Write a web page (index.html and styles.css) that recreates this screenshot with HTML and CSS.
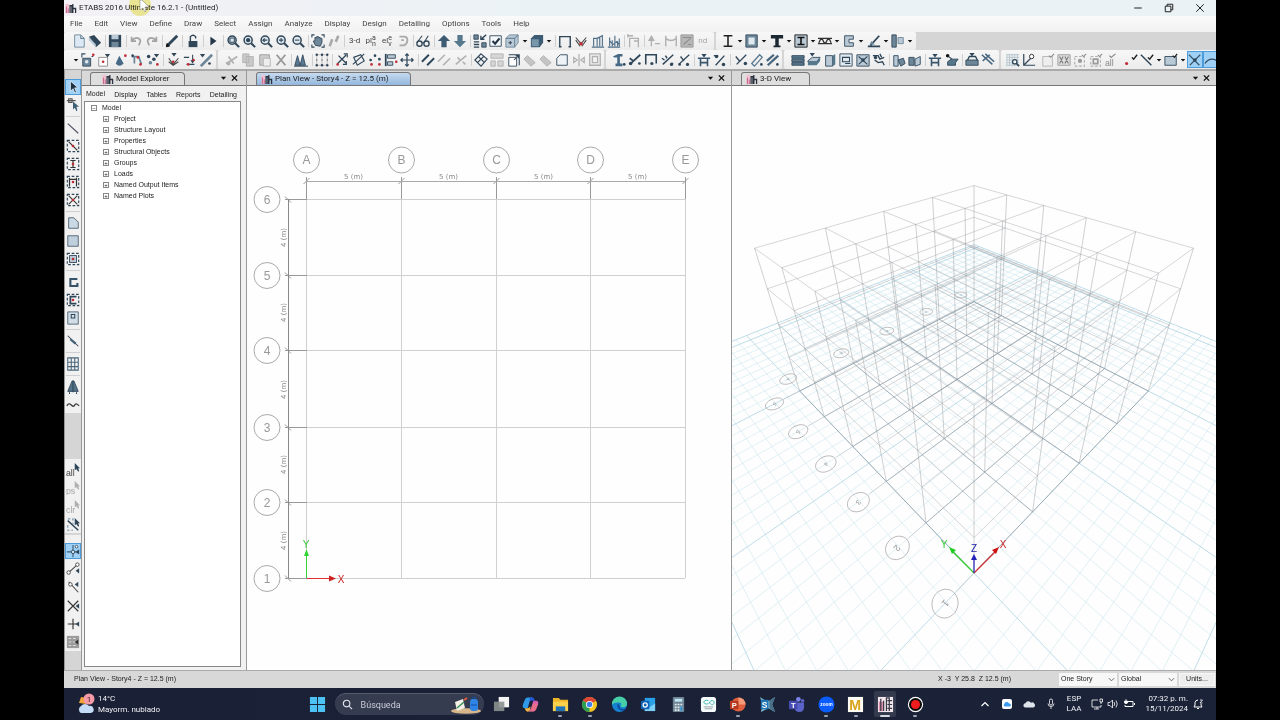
FILE: index.html
```html
<!DOCTYPE html>
<html lang="en">
<head>
<meta charset="utf-8">
<title>ETABS 2016 Ultimate 16.2.1 - (Untitled)</title>
<link rel="stylesheet" href="styles.css">
</head>
<body>
<svg class="defs" aria-hidden="true">
  <symbol id="logo" viewBox="0 0 12 12"><path d="M0 1h4v10H0z" fill="#f0bfd0"/><path d="M1 4v7M3 6v5" stroke="#c25c86"/><path d="M5 11V3h2v8M8 11V1M8 6h3v5" fill="none" stroke="#2b3340" stroke-width="1.4"/></symbol>
  <symbol id="down" viewBox="0 0 8 8"><path d="M1 2.5h6L4 6z" fill="#111"/></symbol>
  <symbol id="close" viewBox="0 0 8 8"><path d="M1 1l6 6M7 1L1 7" stroke="#111" stroke-width="1.6"/></symbol>
  <symbol id="chev" viewBox="0 0 8 8"><path d="M1 2.5l3 3 3-3" fill="none" stroke="#555"/></symbol>
</svg>
<div class="app">
  <header class="titlebar">
    <svg class="logo"><use href="#logo"/></svg>
    <h1 class="title">ETABS 2016 Ultimate 16.2.1 - (Untitled)</h1>
    <div class="window-buttons">
      <button aria-label="Minimize"><svg viewBox="0 0 8 8"><path d="M1 4h6" stroke="#222" stroke-width=".8"/></svg></button>
      <button aria-label="Restore"><svg viewBox="0 0 8 8"><path d="M1 2.5h4.5V7H1zM2.500 2.500V1H7v4.500H5.500" fill="none" stroke="#222" stroke-width=".8"/></svg></button>
      <button aria-label="Close"><svg viewBox="0 0 8 8"><path d="M1 1l6 6M7 1L1 7" stroke="#222" stroke-width=".8"/></svg></button>
    </div>
    <svg class="pointer" viewBox="0 0 26 24" aria-hidden="true"><circle cx="12" cy="5" r="11" fill="#f6f29a"/></svg>
    <svg class="pointer pointer-arrow" viewBox="0 0 26 24" aria-hidden="true"><path d="M12 0v10l3-2 2 4 1-1-1-4h4L14 0z" fill="#fff" stroke="#888" stroke-width=".6"/></svg>
  </header>
  <nav class="menubar" aria-label="Menu">
    <button>File</button><button>Edit</button><button>View</button><button>Define</button><button>Draw</button><button>Select</button><button>Assign</button><button>Analyze</button><button>Display</button><button>Design</button><button>Detailing</button><button>Options</button><button>Tools</button><button>Help</button>
  </nav>
  <div class="toolrow">
    <div class="strip strip-standard" data-tools="new open | save | undo redo | pencil | lock | play | zoomwin zoomfit zoomback zoomin zoomout | pan walk | t:3-d t:plan t:elev rotate | glasses | up down | swap check cube v:cube solid v:solid | frame joint bars bars2 | frameg | pointg frameh boxg t:nd"></div>
    <div class="strip strip-sections" data-tools="ibeam v:i concrete v:r tee v:t encased v:e deck v:d channel v:c brace v:b wall v:w"></div>
  </div>
  <div class="toolrow toolrow-last">
    <div class="strip strip-points" data-tools="v:p boxpin dotpin drop joints scatter | jointc pinlift rodpin"></div>
    <div class="strip strip-edit" data-tools="cut copy paste delete | towers | nodes | cross turn scatter2 align move | par parg crossg | mesh splitg extend diag diag2 chamfer mirrorg offsetg"></div>
    <div class="strip strip-frame" data-tools="section release end load1 load2 | table pct | dist slope rod"></div>
    <div class="strip strip-shell" data-tools="slab slab2 panel opening diaph springs | pier spandrel | table slab3 | stack diag3"></div>
    <div class="strip strip-snap" data-tools="gridsel axes | selg xg ptg2 ptg3 allcheck | redcheck linecheck v:l area v:a snap:on curve:on"></div>
  </div>

  <main class="work">
    <aside class="side" aria-label="Draw tools">
      <div class="vstrip vstrip-draw" data-tools="cursor:on nodecursor | line dashline dashcol dashwall dashx | poly rect dashrect | cwall dashc door | link | grid3 | tower wave"></div>
      <div class="vstrip vstrip-select" data-tools="selall selps selclr selline"></div>
      <div class="vstrip vstrip-snap" data-tools="snap1:on snap2 snap3 snap4 snap5 snap6"></div>
    </aside>

    <section class="pane explorer">
      <div class="pane-head"><button class="tab"><svg class="logo"><use href="#logo"/></svg>Model Explorer</button>
        <span class="pane-tools"><button aria-label="Window options"><svg><use href="#down"/></svg></button><button aria-label="Close pane"><svg><use href="#close"/></svg></button></span></div>
      <div class="subtabs"><button class="is-active">Model</button><button>Display</button><button>Tables</button><button>Reports</button><button>Detailing</button></div>
      <div class="tree">
        <ul class="tree-root"><li><span class="box">−</span>Model
          <ul class="tree-items"><li><span class="box">+</span>Project</li><li><span class="box">+</span>Structure Layout</li><li><span class="box">+</span>Properties</li><li><span class="box">+</span>Structural Objects</li><li><span class="box">+</span>Groups</li><li><span class="box">+</span>Loads</li><li><span class="box">+</span>Named Output Items</li><li><span class="box">+</span>Named Plots</li></ul></li></ul>
      </div>
    </section>

    <section class="pane">
      <div class="pane-head"><button class="tab tab-plan"><svg class="logo"><use href="#logo"/></svg>Plan View - Story4 - Z = 12.5 (m)</button>
        <span class="pane-tools"><button aria-label="Window options"><svg><use href="#down"/></svg></button><button aria-label="Close pane"><svg><use href="#close"/></svg></button></span></div>
      <svg class="canvas" id="plan" viewBox="247 86 484 584" role="img" aria-label="Plan view"></svg>
    </section>

    <section class="pane">
      <div class="pane-head"><button class="tab tab-3d"><svg class="logo"><use href="#logo"/></svg>3-D View</button>
        <span class="pane-tools"><button aria-label="Window options"><svg><use href="#down"/></svg></button><button aria-label="Close pane"><svg><use href="#close"/></svg></button></span></div>
      <svg class="canvas" id="scene" viewBox="732 86 484 584" preserveAspectRatio="xMidYMid slice" role="img" aria-label="3-D view"></svg>
    </section>
  </main>

  <footer class="status">
    <span class="status-view">Plan View - Story4 - Z = 12.5 (m)</span>
    <span class="status-pos">X -3&nbsp; Y 25.8&nbsp; Z 12.5 (m)</span>
    <span class="pick"><select aria-label="Story"><option>One Story</option></select><svg><use href="#chev"/></svg></span>
    <span class="pick"><select aria-label="Coordinate system"><option>Global</option></select><svg><use href="#chev"/></svg></span>
    <button class="units">Units...</button>
  </footer>

  <div class="taskbar">
    <button class="weather">
      <svg viewBox="0 0 20 24"><path d="M3 11l2-6 6 1-1 6z" fill="#f2a33a"/><circle cx="13" cy="7" r="5.500" fill="#f79aa8"/><text x="13" y="10" font-size="8" text-anchor="middle" fill="#3a1820">1</text><path d="M5 21a4 4 0 0 1 0-7 5 5 0 0 1 8 0 3.500 3.500 0 0 1 2 7z" fill="#c4dcf8"/></svg>
      <span>14°C<br>Mayorm. nublado</span>
    </button>
    <div class="dock">
      <button aria-label="Start"><svg viewBox="0 0 18 18"><path d="M1 1h7.500v7.500H1zM9.500 1H17v7.500H9.500zM1 9.500h7.500V17H1zM9.500 9.500H17V17H9.500z" fill="#4cc3f4"/></svg></button>
      <label class="search"><svg viewBox="0 0 12 12"><circle cx="5" cy="5" r="3.600" fill="none" stroke="#e6e9f0" stroke-width="1.200"/><path d="M8 8l3 3" stroke="#e6e9f0" stroke-width="1.200"/></svg><input type="text" placeholder="Búsqueda" aria-label="Búsqueda">
        <svg class="promo" viewBox="0 0 30 18"><ellipse cx="15" cy="15" rx="15" ry="2.800" fill="#d8b68c"/><path d="M4 6l8-3 2 9-8 3z" fill="#f4f1e6"/><path d="M6 12l7-6" stroke="#3c8b5b" stroke-width="1.500"/><rect x="19" y="3" width="8" height="12" rx="3" fill="#2f84e6"/><path d="M21 3a2 2 0 0 1 4 0M20 9h6" stroke="#0f4ea8" fill="none"/><path d="M13 4l3-2" stroke="#e05a3a" stroke-width="2"/></svg></label>
      <button aria-label="Task view"><svg viewBox="0 0 18 18"><path d="M6 1h11v11H6z" fill="#f4f4f4"/><path d="M1 6h11v10H1z" fill="#8b918f" opacity=".9"/></svg></button>
      <button aria-label="Copilot"><svg viewBox="0 0 18 18"><path d="M6 1.500h5Q9 3 8 6l-2 7H3q-3 0-2-4l2-5q1-2.500 3-2.500z" fill="#2f9be8"/><path d="M9 1.500h2.500Q13 2 13.500 5H9Q8 6 8 6q0-4 1-4.500z" fill="#2656d8"/><path d="M12 5h3q3 0 2 4l-2 5q-1 2.500-3 2.500H7Q9 15 10 12z" fill="#d65cb4"/><path d="M3 13h3.500L9 11q0 4-2 5.500Q4 17 3 13z" fill="#f4b53c"/><path d="M10 12l1.500-4H17l-2 6q-1 2.500-3 2.500H7q2-1 3-4.500z" fill="#f07a6a" opacity=".6"/></svg></button>
      <button class="runs" aria-label="File Explorer"><svg viewBox="0 0 18 18"><path d="M1 2h6l2 2h8v12H1z" fill="#f0b429"/><path d="M1 6h16v10H1z" fill="#fbd04b"/><path d="M4 11h10v5H4z" fill="#1f74b8"/></svg></button>
      <button class="runs" aria-label="Chrome"><svg viewBox="0 0 18 18"><circle cx="9" cy="9" r="8" fill="#f6c61f"/><path d="M9 9L2.100 5A8 8 0 0 1 15.900 5z" fill="#dd4436"/><path d="M9 9v8A8 8 0 0 1 2.100 5z" fill="#2c9e52"/><circle cx="9" cy="9" r="3.800" fill="#fff"/><circle cx="9" cy="9" r="2.900" fill="#3f7fe8"/></svg></button>
      <button aria-label="Edge"><svg viewBox="0 0 18 18"><circle cx="9" cy="9" r="8" fill="#1583d0"/><path d="M1 9a8 8 0 0 1 16-1q0 4-5 4-3-1-1-3 0-3-4-2-4 0-6 2z" fill="#47cfa8"/><path d="M7 8q-2 6 5 8 3-1 4-3-6 2-7-2 0-2-2-3z" fill="#0d4fa0"/></svg></button>
      <button aria-label="Outlook"><svg viewBox="0 0 18 18"><path d="M5 2h11v14H5z" fill="#2aa0e6"/><path d="M5 8l5 4 6-4v8H5z" fill="#7fd0f8"/><rect x="1" y="5" width="9" height="9" rx="1" fill="#0f64b8"/><circle cx="5.500" cy="9.500" r="2.200" fill="none" stroke="#fff" stroke-width="1.300"/></svg></button>
      <button aria-label="Calculator"><svg viewBox="0 0 18 18"><rect x="3" y="1" width="12" height="16" rx="1" fill="#6f8494"/><path d="M5 3h8v3H5z" fill="#bfe6f4"/><path d="M5 9h8M5 12h8M5 15h8" stroke="#e8eef2" stroke-width="1.800" stroke-dasharray="2 1"/><path d="M11 11h2v5h-2z" fill="#2e8fd0"/></svg></button>
      <button aria-label="GeoMap"><svg viewBox="0 0 18 18"><rect x="1" y="1" width="16" height="16" rx="3" fill="#f5fafa"/><path d="M9 5a3 2 0 1 0 0 3M10 8c0-4 5-4 5-1s-4 2-4 1" fill="none" stroke="#3db7b0"/><path d="M4 11.500h10M5 13.500h8" stroke="#97a4a8"/></svg></button>
      <button class="runs" aria-label="PowerPoint"><svg viewBox="0 0 18 18"><circle cx="10" cy="9" r="7.500" fill="#e0603e"/><path d="M10 1.500A7.500 7.500 0 0 1 17.500 9H10z" fill="#f49a78"/><rect x="1" y="5" width="9" height="9" rx="1" fill="#b83a1e"/><text x="5.500" y="12.500" font-size="8" font-weight="bold" text-anchor="middle" fill="#fff">P</text></svg></button>
      <button aria-label="SAP"><svg viewBox="0 0 18 18"><path d="M1 1l6 4 4 0 6-4-3 8 3 8-7-4-8 4 2-8z" fill="#7fb7cc"/><path d="M17 1l-3 8 3 8-6-4V5z" fill="#466e86"/><rect x="2" y="4" width="8" height="10" fill="#1c73b6"/><text x="6" y="12.500" font-size="9" font-weight="bold" text-anchor="middle" fill="#fff">S</text></svg></button>
      <button aria-label="Teams"><svg viewBox="0 0 18 18"><circle cx="11" cy="3.500" r="2.500" fill="#7b83eb"/><circle cx="15.500" cy="5" r="1.800" fill="#5b62c8"/><path d="M7 7h10v5q0 5-5 5t-5-5z" fill="#5b62c8"/><rect x="1" y="5" width="9" height="9" rx="1" fill="#454bb0"/><text x="5.500" y="12.300" font-size="8" font-weight="bold" text-anchor="middle" fill="#fff">T</text></svg></button>
      <button class="runs" aria-label="Zoom"><svg viewBox="0 0 18 18"><circle cx="9" cy="9" r="8.500" fill="#0b5cff"/><text x="9" y="10.800" font-size="5" font-weight="bold" text-anchor="middle" fill="#fff">zoom</text></svg></button>
      <button class="runs" aria-label="Mathcad"><svg viewBox="0 0 18 18"><path d="M1 1h16v16H1z" fill="#fffdf4"/><text x="8.500" y="14.500" font-size="15" font-weight="bold" text-anchor="middle" fill="#dba21c">M</text></svg></button>
      <button class="runs current" aria-label="ETABS"><svg viewBox="0 0 18 18"><path d="M1 1h16v16H1z" fill="#f3e6ec"/><path d="M2 6h5v10H2z" fill="#d98cab"/><path d="M4 16V3M7 16V5M10 16V2h3v14M11 5h5M11 9h5M11 13h5" stroke="#393c48" stroke-width="1.300" fill="none"/></svg></button>
      <button class="runs" aria-label="Recorder"><svg viewBox="0 0 18 18"><circle cx="9" cy="9" r="7.500" fill="#0a0a0a" stroke="#fff" stroke-width="1.200"/><circle cx="9" cy="9" r="4.800" fill="#ee1c1c"/></svg></button>
    </div>
    <div class="tray">
      <button aria-label="Show hidden icons"><svg viewBox="0 0 12 12"><path d="M2.500 8L6 4.500 9.500 8" stroke="#fff" fill="none" stroke-width="1.200"/></svg></button>
      <button aria-label="iCloud"><svg viewBox="0 0 12 12"><rect x="1" y="1" width="10" height="10" rx="2" fill="#fff"/><path d="M3.500 8.500a2 2 0 0 1 0-3 2.500 2.500 0 0 1 4.500 0 1.600 1.600 0 0 1 1 3z" fill="#3a9af0"/></svg></button>
      <button aria-label="OneDrive"><svg viewBox="0 0 12 12"><path d="M2.500 9.500a2 2 0 0 1 0-4.200 3 3 0 0 1 5.500-.5 2.400 2.400 0 0 1 2.500 4.700z" fill="#dfe3ea"/></svg></button>
      <button aria-label="Microphone"><svg viewBox="0 0 12 12"><rect x="4.500" y="1" width="3" height="6" rx="1.500" fill="none" stroke="#fff" stroke-width=".8"/><path d="M3 5.500q0 3 3 3t3-3M6 8.500V11" fill="none" stroke="#fff" stroke-width=".8"/></svg></button>
      <button class="lang">ESP<br>LAA</button>
      <button class="system" aria-label="Network, volume and battery">
        <svg viewBox="0 0 12 12"><path d="M7 2H1v7h9V7M3 11h5M6 9v2" fill="none" stroke="#fff" stroke-width=".8"/><path d="M9 1h2.500v3H9zM10 4v2" fill="none" stroke="#fff" stroke-width=".8"/></svg>
        <svg viewBox="0 0 12 12"><path d="M1 4.500h2L5.500 2v8L3 7.500H1zM7 4q1.500 2 0 4M9 2.500q2.500 3.500 0 7" fill="none" stroke="#fff" stroke-width=".8"/></svg>
        <svg viewBox="0 0 12 12"><path d="M4 3.500h6v5H2V7M11.500 5v2" fill="none" stroke="#fff"/><path d="M3 1v3M1.500 3v2q1.500 1.500 3 0V3z" fill="#fff" stroke="#fff" stroke-width=".7"/></svg>
      </button>
      <button class="clock">07:32 p. m.<br>15/11/2024</button>
      <button aria-label="Notifications"><svg viewBox="0 0 12 12"><path d="M2 9h8L9 7V6M3 7V4.500Q3.500 2 6 2M5 10.500h2M3 7L2 9" fill="none" stroke="#fff"/><path d="M8 2h2.500L8 5h2.500" fill="none" stroke="#fff" stroke-width=".8"/></svg></button>
    </div>
  </div>
</div>
<script src="app.js"></script>
</body>
</html>
```

FILE: styles.css
```css
* { box-sizing: border-box; }
body { margin: 0; background: #000; color: #222; font: 8px/10px Roboto, "Liberation Sans", sans-serif; }
button { margin: 0; padding: 0; border: 0; background: none; color: inherit; font: inherit; }
h1, ul { margin: 0; padding: 0; font: inherit; list-style: none; }
svg { display: block; flex: none; }
.defs { position: absolute; width: 0; height: 0; }
.app { display: flex; flex-direction: column; height: 100vh; margin: 0 5%; overflow: hidden; background: #d5d5d5; }
.logo { width: 12px; height: 11px; }

.titlebar { position: relative; display: flex; align-items: center; height: 16px; padding-left: 1px; gap: 2px; background: linear-gradient(90deg, #f3f1f6, #ebf2f5 40%); }
.title { color: #222; }
.window-buttons { display: flex; gap: 15px; margin-left: auto; padding-right: 8px; }
.window-buttons button { width: 16px; height: 16px; padding: 3px; }
.window-buttons svg { width: 10px; height: 10px; }
.pointer { position: absolute; left: 64px; top: 0; width: 26px; height: 24px; z-index: 2; mix-blend-mode: multiply; }
.pointer-arrow { mix-blend-mode: normal; }
.menubar { display: flex; gap: 12px; height: 16px; padding-left: 6px; background: linear-gradient(#fafafa, #f1f1f1); color: #444; }

.toolrow { display: flex; gap: 2px; height: 18px; background: #d5d5d5; }
.toolrow-last { height: 20px; border-bottom: 1px solid #aaa; }
.strip { display: flex; align-items: center; justify-content: space-between; min-width: 0; background: linear-gradient(#f7f7f7, #ececec); border-radius: 2px; }
.strip-standard { width: 650px; padding: 0 3px 0 7px; }
.strip-sections { width: 200px; padding: 0 2px 0 4px; }
.strip-points { width: 152px; padding: 0 2px 0 8px; }
.strip-edit { width: 386px; padding: 0 1px 0 6px; }
.strip-frame { width: 176px; padding: 0 1px 0 5px; }
.strip-shell { width: 215px; padding: 0 3px 0 6px; }
.strip-snap { flex: 1; padding: 0 0 0 4px; overflow: hidden; }
.tool { width: 16px; height: 17px; padding: 1px; }
.tool svg { width: 14px; height: 14px; }
.tool-drop { width: 8px; }
.tool-drop svg { width: 6px; height: 6px; }
.tool-text { display: flex; align-items: center; justify-content: center; font-size: 8px; color: #444; }
.tool-text small { display: flex; flex-direction: column; font-size: 7px; line-height: 6px; }
.tool-muted { color: #a5a5a5; }
.is-on { background: #9fd0f5; outline: 1px solid #4d9bd8; outline-offset: -1px; }
.sep { width: 1px; height: 12px; margin: 0 1px 0 2px; background: #cfcfcf; }

.work { flex: 1; display: grid; grid-template-columns: 17px 165px minmax(0, 1fr) minmax(0, 1fr); min-height: 0; }
.side { padding-top: 9px; border-left: 1px solid #999; background: #d5d5d5; }
.vstrip { display: flex; flex-direction: column; align-items: center; justify-content: space-between; background: #f1f1f1; }
.vstrip .tool { height: 16px; }
.vstrip .sep { width: 14px; height: 1px; margin: 1px 0; }
.vstrip-draw { height: 334px; }
.vstrip-select { height: 74px; margin-top: 46px; padding-top: 3px; }
.vstrip-snap { height: 116px; margin-top: 2px; padding: 8px 0 1px; }

.pane { display: flex; flex-direction: column; min-width: 0; min-height: 0; border-left: 1px solid #999; background: #fefefe; }
.pane-head { display: flex; align-items: flex-end; justify-content: space-between; height: 16px; padding-left: 9px; border-top: 1px solid #aaa; border-bottom: 1px solid #777; background: #d8d8d8; }
.tab { display: flex; align-items: center; gap: 2px; height: 13px; padding: 0 21px 0 4px; border: 1px solid #777; border-bottom: 0; border-radius: 3px 4px 0 0; background: #dedede; color: #222; white-space: nowrap; }
.explorer .tab { padding: 0 18px 0 11px; }
.tab-plan { background: linear-gradient(#c6daf0, #94b7dd); }
.tab-3d { padding-right: 18px; }
.pane-tools { display: flex; gap: 4px; padding: 0 6px 3px 0; }
.pane-tools svg { width: 7px; height: 8px; }
.canvas { flex: 1; width: 100%; min-height: 0; }
.explorer { background: #f1f1f1; padding-right: 5px; font: 7px/10px "Liberation Sans", sans-serif; }
.explorer .pane-head { margin-right: -5px; padding-left: 8px; font: 8px/10px Roboto, sans-serif; }
.explorer .pane-tools { padding-right: 8px; }
.explorer .tab { padding: 0 15px 0 11px; font: inherit; }
.subtabs { display: flex; justify-content: space-between; height: 15px; padding: 3px 4px 0 4px; }
.subtabs .is-active { margin-top: -3px; }
.tree { flex: 1; margin: 0 0 3px 2px; padding: 0 0 0 6px; border: 1px solid #888; background: #fff; line-height: 11px; }
.tree-items { margin-left: 3px; padding-left: 9px; }
.box { display: inline-block; width: 6px; height: 6px; margin-right: 5px; border: 1px solid #888; background: #fff; color: #222; font: 6px/4px "Liberation Sans", sans-serif; text-align: center; vertical-align: 0; }

.status { display: flex; align-items: center; gap: 2px; height: 18px; padding: 1px 1px 2px 10px; border-top: 1px solid #aaa; background: #d8d8d8; font: 7px/10px "Liberation Sans", sans-serif; }
.status-pos { margin: 0 46px 0 auto; }
.pick { position: relative; width: 58px; height: 13px; background: #f7f7f7; }
.pick select { width: 100%; height: 100%; padding: 0 2px; border: 0; appearance: none; background: none; color: #222; font: inherit; }
.pick svg { position: absolute; right: 2px; top: 3px; width: 7px; height: 7px; }
.units { width: 36px; height: 13px; background: #ededed; border: 1px solid #f6f6f6; }

.taskbar { display: flex; align-items: center; height: 32px; padding: 0 12px; background: linear-gradient(90deg, #1a2036, #1b2338); color: #f2f2f5; }
.weather { display: flex; align-items: center; gap: 2px; width: 230px; text-align: left; line-height: 11px; }
.weather svg { width: 20px; height: 24px; }
.dock { display: flex; align-items: center; justify-content: space-between; width: 620px; font-family: "Liberation Sans", sans-serif; }
.dock button { position: relative; display: flex; align-items: center; justify-content: center; width: 22px; height: 26px; }
.dock svg { width: 17px; height: 17px; }
.dock .runs::after { content: ""; position: absolute; bottom: 0; left: 9px; width: 4px; height: 2px; border-radius: 1px; background: #9da3b0; }
.dock .current { background: #343a4e; border-radius: 2px; }
.dock .current::after { left: 6px; width: 10px; background: #d8dbe2; }
.search { display: flex; align-items: center; gap: 8px; width: 149px; height: 22px; margin: 0 -1px; padding: 0 3px 0 7px; border-radius: 11px; background: #363c50; border-top: 1px solid #555b6d; }
.search .promo { width: 30px; height: 18px; }
.search svg { width: 11px; height: 11px; }
.search input { flex: 1; min-width: 0; padding: 0; border: 0; outline: 0; background: none; color: #d5d8e0; font: 9px/12px Roboto, sans-serif; }
.search input::placeholder { color: #c9ccd6; opacity: 1; }
.tray { display: flex; align-items: center; gap: 10px; margin-left: auto; }
.tray svg { width: 12px; height: 12px; }
.lang, .clock { line-height: 10px; }
.clock { text-align: right; margin-right: -6px; }
.system { display: flex; gap: 4px; }
.plan-text { fill: #999; font: 12px "Liberation Sans", sans-serif; text-anchor: middle; }
.dim-text { fill: #888; font: 7px "DejaVu Sans", sans-serif; text-anchor: middle; }
.axis-text { font: 10px "Liberation Sans", sans-serif; text-anchor: middle; }
.icon-text { font: 10px "Liberation Sans", sans-serif; }
```

FILE: app.js
```js
const INK = '#2f4659', MID = '#6d8799', PALE = '#b9c9d6', OFF = '#b0b0b0', RED = '#c22a35';

// small drawing helpers: s = stroked path, f = filled path
const s = (d, c = INK, w = 1.2) => `<path d="${d}" fill="none" stroke="${c}" stroke-width="${w}"/>`;
const f = (d, c = INK, k = 'none') => `<path d="${d}" fill="${c}" stroke="${k}"/>`;
const dot = (x, y, c = RED, r = 1.5) => `<circle cx="${x}" cy="${y}" r="${r}" fill="${c}"/>`;
const dash = (d, c = INK) => `<path d="${d}" fill="none" stroke="${c}" stroke-width="1.3" stroke-dasharray="3 2"/>`;
const lens = inner => `<circle cx="7" cy="7" r="4.600" fill="#dfe7ec" stroke="${INK}" stroke-width="1.700"/>${s('M10.500 10.500L15 15', INK, 2.4)}${inner}`;
const word = (t, c) => `<text class="icon-text" x="0" y="15" fill="${c}">${t}</text>`;
const gem = f('M9 1h6l-3 4z', INK);
const arrowHead = c => f('M10 0v8l2-1 2 3 1-1-1-3h2z', c);
const frameBox = dash('M1.500 1.500h13v13h-13z');

const ICONS = {
  new: f('M3 1h7l4 4v10H3z', '#dce8f3', MID) + s('M10 1v4h4', MID),
  open: f('M1 3l6-2 8 9-6 5z', INK) + f('M1 3v4l8 8v-3z', PALE),
  save: f('M1 1h14v14H1z', INK) + f('M4 1h8v5H4z', PALE) + f('M4 9h8v6H4z', MID),
  undo: s('M3 3v5h5M3 8q4-5 8-3t0 8', '#a3a3a3', 2), redo: s('M13 3v5H8M13 8Q9 3 5 5t0 8', '#a3a3a3', 2),
  pencil: s('M2 14L14 2', INK, 3.2) + f('M1 15l1-5 4 4z', '#111'),
  lock: f('M3 8h10v7H3z', INK) + s('M5 8V3q3-3 6 0v2', INK, 1.6),
  play: f('M5 3l7 5-7 5z', '#24374a'),
  zoomwin: lens(s('M4.500 4.500h5v5h-5z', INK)), zoomfit: lens(dot(7, 7, INK, 2.4)),
  zoomback: lens(s('M4.500 7h5M6.500 5l-2 2 2 2', INK)), zoomin: lens(s('M4.500 7h5M7 4.500v5', INK)), zoomout: lens(s('M4.500 7h5', INK)),
  pan: s('M1 4V1h3M12 1h3v3M1 12v3h3M12 15h3v-3', INK) + f('M5 13L2.500 8l2 0V4h2V3h2v1h2v1h2v5l-2 4z', MID, INK),
  walk: s('M3 14l3-8M10 9l3-7', '#a9a9a9', 3),
  rotate: s('M4 3h5q4 0 4 4t-4 6H4M6 7h3', '#a9a9a9', 2),
  glasses: '<circle cx="4" cy="11" r="3" fill="none" stroke="#2f4659" stroke-width="1.500"/><circle cx="12" cy="11" r="3" fill="none" stroke="#2f4659" stroke-width="1.500"/>' + s('M1 10l6-8M9 10l5-8M7 10h2'),
  up: f('M8 1l7 7h-4v7H5V8H1z', '#3d5a73'), down: f('M8 15L1 8h4V1h6v7h4z', '#56788c'),
  swap: f('M1 1h5v5H1zM10 10h5v5h-5z', MID, INK) + s('M15 1L9 6M9 2v4h4M1 9h6M1 12h6M1 15h6', INK, 1.5),
  check: f('M1 2h13v12H1z', '#f4f8fb', INK) + s('M4 8l3 3 5-6', '#234', 2.4),
  cube: f('M1 5l4-4h10v9l-4 5H1z', PALE, MID) + s('M1 5h10v10M11 5l4-4', MID) + s('M6 8v4M4 10h4', INK),
  solid: f('M1 5l4-4h10v9l-4 5H1z', '#3c5c76') + f('M2 6h8v8H2z', '#7897ab'),
  frame: s('M2 15V3h12v12M1 14.500h3M12 14.500h3', INK, 1.6),
  joint: s('M2 4l6 7 6-7M2 7l5 7M14 7l-5 7', '#444') + dot(8, 11, RED, 2),
  bars: s('M1 15h14M3 14V5h4v9M7 5l6-3v12M10 3v11', '#51708a', 1.3), bars2: s('M1 15h14M3 14V4M6 14V7M9 14V2M12 14V8M14 14V5M3 8l4 4 4-3 3 3', '#51708a', 1.3),
  frameg: s('M3 15V5h10v10M1 2h6M1 0v4M8 8h5', OFF, 1.5), pointg: f('M5 1l4 7H1z', OFF) + s('M5 8v6M9 11h6', OFF, 1.5),
  frameh: s('M2 2v12M14 2v12M2 5q6 5 12 0', OFF, 1.6), boxg: f('M1 1h14v14H1z', '#b6b6b6', '#999') + s('M3 4h10M4 12l8-7M9 12h4', '#8d8d8d'),
  ibeam: s('M3 2h10M8 2v12M3 14h10', '#222', 1.8), concrete: f('M1 1h13v14H1z', MID, INK) + f('M4 4h7v8H4z', '#dfe9f0'),
  tee: f('M1 1h14v4H10v8h2v2H4v-2h2V5H1z', '#1c2933'), encased: f('M1 1h14v14H1z', PALE, '#111') + s('M4 4h8M8 4v8M4 12h8', '#111', 1.8),
  deck: s('M0 5h16M0 11h16M1 10l2-4h2l2 4h2l2-4h2l2 4', '#333', 1.5), channel: f('M13 2H3v12h10v-4H8V6h5z', PALE, INK),
  brace: s('M1 14h14M4 13L14 2', INK, 2) + f('M5 8l4 4H3z', MID), wall: f('M1 1h5v14H1z', MID, INK) + f('M8 4h6v7H8z', PALE, MID),
  boxpin: f('M2 6h9v9H2z', MID, INK) + s('M1 5V1h4M12 4h2', INK) + dot(14, 2) + dot(6.5, 10, '#dfe9f0', 2), dotpin: f('M2 5h10v10H2z', '#fff', '#888') + dot(7, 10) + gem,
  drop: f('M6 3l5 9q-5 5-9 0z', '#466985') + dot(13, 3), joints: s('M2 4h8l3 9M5 4v8', MID, 2) + dot(12, 13) + dot(9, 5) + dot(3, 3, INK),
  scatter: dot(3, 4, INK, 2) + dot(9, 7, INK, 2) + dot(5, 11, MID, 2) + dot(13, 13) + gem,
  jointc: s('M2 6l5 7 6-7M2 10l5 4 6-4', '#444') + dot(7, 10) + f('M5 0h6L8 4z'), pinlift: s('M1 5h6M4 13h9M11 2v9M9 8l2 3 2-3', INK) + dot(6, 13) + dot(12, 8),
  rodpin: s('M2 15L15 2', MID, 3) + f('M1 1h6L4 5z') + dot(12, 12, INK),
  cut: s('M1 12l4-2 9-6M4 4l6 8', OFF, 2) + dot(4, 12, OFF, 2.2), copy: f('M2 1h7v10H2zM6 4h8v11H6z', '#c9c9c9', OFF), paste: f('M2 2h11v12H2z', '#ccc', '#999') + f('M6 6h8v9H6z', '#eee', OFF), delete: s('M3 2l10 12M13 2L3 14', '#999', 2.2),
  towers: f('M1 14l3-11 3 11zM7 14l3-12 3 12z', '#5b7a94', INK) + s('M0 15h16', INK),
  nodes: s('M2 2h12M2 14h12M2 2v12M8 2v12M14 2v12', '#aaa', .8) + [2, 8, 14].map(x => dot(x, 2, INK, 1.4) + dot(x, 14, INK, 1.4) + dot(x, 8, '#666', .8)).join(''),
  cross: s('M3 12L13 2M4 3l9 9', INK, 1.5) + dot(3, 13) + s('M13 9v4H9M10 1h4v4', INK), turn: s('M2 5l8-3 4 7-8 5zM1 13L14 1', INK, 1.3),
  scatter2: dot(3, 8, INK) + dot(8, 3, INK) + dot(13, 13) + dot(13, 7, INK) + dot(4, 13), align: s('M2 1v14', INK, 2) + f('M4 2h9v4H4zM4 10h6v4H4z', PALE, INK) + dot(14, 10),
  move: s('M8 1v14M1 8h14M6 3l2-2 2 2M6 13l2 2 2-2M3 6L1 8l2 2M13 6l2 2-2 2', INK, 1.4),
  par: s('M1 10L9 2M7 14l8-8', INK, 2.2), parg: s('M1 10L9 2M7 14l8-8', OFF, 1.8), crossg: s('M2 13L14 3M4 5l3 3M10 10l3 3', OFF, 1.7),
  mesh: s('M8 1l7 6-7 8-7-7zM5 4l7 7M11 4l-7 7', INK, 1.3), splitg: f('M1 1h14v5H1zM1 9h5v6H1zM9 9h6v6H9z', '#d6d6d6', OFF), extend: f('M2 5h9v10H2z', '#fff', INK) + s('M2 2h12v12M8 8l5-5M10 3h3v3', INK),
  diag: f('M5 3l9 8-5 4-8-8z', '#c4c4c4', OFF), diag2: f('M5 3l9 8-5 4-8-8z', '#c4c4c4', OFF), chamfer: f('M2 6l4-4h8v12H2z', '#eef3f7', INK), mirrorg: s('M8 1v14M2 5v6l4-3zM14 5v6l-4-3z', OFF, 1.4), offsetg: s('M2 1h12v13H2zM5 4h6v7H5z', OFF, 1.5),
  section: f('M1 4l6-3h5v3H9v8h3v3H4v-3h2V5H3z', '#466985') + dot(14, 13, INK), release: s('M2 13L14 2M2 6l4 3', INK, 2) + dot(3, 12, INK, 2) + dot(13, 12, INK), end: s('M2 13V2h12v10', INK, 1.8) + dot(9, 12, INK, 1.8),
  load1: s('M2 13L14 2M1 6l3 2M5 3l2 3M11 12h3', INK, 1.6) + dot(12, 13, INK, 1.8), load2: s('M2 13L14 2M4 4l4 5', INK, 1.5) + dot(12, 13, INK, 1.8) + dot(3, 13, INK),
  table: s('M1 6h14M4 6v9M12 6v9M4 11h8', '#39566c', 1.8) + f('M5 1h6L8 5z'), pct: s('M3 14L13 3M1 3h5', INK, 1.5) + dot(4, 4, INK, 2) + dot(12, 13, INK, 2),
  dist: s('M3 13L14 2M2 4l5 6', INK, 1.5) + dot(13, 12, INK, 2), slope: s('M2 12L11 2l3 3-9 10z', '#55758c', 1.4) + dot(13, 13, INK), rod: s('M2 14L14 3M1 9l8-7', '#48677f', 2.6) + dot(13, 13, INK),
  slab: f('M1 3h14v3H1zM1 7h14v3H1zM1 11h14v3H1z', '#56788c', INK), slab2: f('M1 9l5-4h9l-4 5H1z', PALE, INK) + f('M1 10h10v4H1zM11 10l4-5v4l-4 5z', '#56788c') + f('M3 0h6L6 4z'),
  panel: f('M3 3h8v12H3z', PALE, INK) + f('M11 3l3-2v12l-3 2z', '#56788c'), opening: f('M1 1h14v14H1z', '#e2eaf0', INK) + s('M4 5h8v5H4zM7 12h6', INK), diaph: f('M1 2h14v13H1z', PALE, INK) + s('M3 4l10 9M13 4L3 13', INK) + dot(8, 8, INK, 2),
  springs: s('M1 3h6l2 4 5-2M3 8l4 3 5-1 2 4M9 1l2 4', INK, 1.5) + dot(4, 5, INK, 2), pier: f('M2 3h5v12H2z', PALE, INK) + f('M7 8l6-2 2 6-5 3z', MID, INK), spandrel: f('M1 5h6v9H1z', MID, INK) + f('M8 7l6-3v9l-6 2z', PALE, INK),
  slab3: f('M3 10l4-3h8l-3 4v3H3z', '#56788c', INK) + dot(3, 3, '#111', 2) + s('M4 4l4 3'), stack: f('M1 8h14v6H1z', MID, INK) + s('M3 8l2-4h7l2 4', INK, 1.6) + f('M5 0h6L8 4z'), diag3: s('M1 2l12 11M5 1l10 9M2 9l8-7', '#48677f', 1.8),
  gridsel: s('M1 1v14M4 1v14M7 1v14M10 1v14M13 1v14M1 2h14M1 5h14M1 8h14M1 11h14M1 14h14', '#9db3c1', .7) + '<circle cx="10" cy="10" r="2.500" fill="#fff" stroke="#2f4659" stroke-width="1.500"/>' + s('M12 12l3 3', INK, 2),
  axes: s('M2 1v13h13M2 14L12 4', INK, 1.4) + '<circle cx="11" cy="4" r="2.500" fill="#fff" stroke="#222"/>', selg: f('M2 4h11v11H2z', '#eee', OFF) + s('M9 3l2 2 4-4', '#888'), xg: f('M1 2h14v12H1z', '#ddd', '#999') + s('M3 4l4 8M7 4l-4 8M9 4l4 8M13 4L9 12', '#777'),
  ptg2: dash('M2 4h11v11H2z', OFF) + dot(8, 9, '#999', 2.4) + s('M10 2l2 2 3-3', '#888'), ptg3: dash('M2 4h11v11H2z', OFF) + s('M5 7h5v5H5z', '#999', 2) + s('M10 2l2 2 3-3', '#888'),
  allcheck: word('all', '#888') + s('M5 3l2 2 5-4', '#888', 1.4),
  redcheck: dot(3, 12, RED, 1.8) + s('M9 5l2 2 4-5', '#222', 1.6), linecheck: s('M1 2l12 12', INK, 1.6) + s('M9 5l2 2 4-5', '#222', 1.6), area: f('M1 4h13v10H1z', PALE, INK) + s('M10 3l2 2 3-4', '#222', 1.5),
  snap: s('M1 2l6 6 6 6M2 14L14 2', '#35566d', 1.3) + dot(8, 8, INK, 2), curve: s('M1 12q6-8 14-3', INK, 1.4),
  cursor: f('M5 1v12l3-3 2 5 2-1-2-5h4z', '#1f3341', '#dfeefa'), nodecursor: f('M8 4v9l2-2 2 4 1-1-1-4h3z', '#3e6075') + s('M1 3h10M3 1h4v4H3z', '#555'), line: s('M2 3l12 11', '#556', 1.4),
  dashline: frameBox + s('M3 3l10 10', '#333', 1.4) + dot(8, 8), dashcol: frameBox + s('M5 4h6M8 4v8M5 12h6', '#333', 1.4) + dot(8, 8), dashwall: frameBox + s('M4 3v10M12 3v10M4 5h8', '#333', 1.4) + dot(8, 8), dashx: frameBox + s('M3 3l10 10M13 3L3 13', '#333', 1.2) + dot(8, 8),
  poly: f('M3 2h6l5 5v7H3z', '#cbd9e4', '#4a5f70'), rect: f('M2 2h12v12H2z', '#c0cfdc', '#4a5f70'), dashrect: frameBox + f('M4 4h8v8H4z', PALE, INK) + dot(8, 8),
  cwall: s('M13 4.500H5v8h8V9', '#36536a', 2.4), dashc: frameBox + s('M12 4H5v8h7', INK, 2) + dot(8, 8), door: f('M2 1h12v14H2z', '#d2dee7', '#4a5f70') + s('M6 4h4v4H6z', INK),
  link: s('M2 2l12 12', '#445', 1.2) + s('M5 6l6 5', '#3e6075', 2.6), grid3: s('M2 1h12v14H2zM6 1v14M10 1v14M2 6h12M2 11h12', '#4a6579', 1.2),
  tower: f('M7 1h2l5 12H2z', '#54738a', INK) + s('M8 1v13M4 14v2M12 14v2', INK), wave: s('M1 9q2-4 5-1t4 0 5 1', '#444', 1.6),
  selall: word('all', '#444') + arrowHead(INK), selps: word('ps', '#a5a5a5') + arrowHead(OFF), selclr: word('clr', '#a5a5a5') + arrowHead(OFF),
  selline: s('M2 3l12 11', INK, 1.6) + dash('M2 1h6v6M2 8v6h6', '#7a98ad') + arrowHead(INK),
  snap1: s('M8 1v14M1 9h14', '#3e6075', 1.3) + '<circle cx="8" cy="9" r="2" fill="#cde4f5" stroke="#2f4659"/>' + f('M15 6v6l-4-3z') + '<circle cx="12" cy="3" r="1.500" fill="#fff" stroke="#2f4659"/>',
  snap2: s('M2 13L13 3', '#444') + '<circle cx="3" cy="12" r="2" fill="#fff" stroke="#444"/><circle cx="13" cy="3" r="2" fill="#fff" stroke="#444"/>' + f('M15 7v6l-4-3z'), snap3: s('M3 2l11 12', '#444') + '<circle cx="5" cy="5" r="2" fill="#fff" stroke="#444"/>' + f('M14 2v6l-4-3z'),
  snap4: s('M2 2l12 12M14 2L2 14', '#333', 1.3) + f('M15 5v6l-4-3z'), snap5: s('M8 2v12M2 8h12', '#333', 1.3) + f('M15 5v6l-4-3z'), snap6: f('M1 1h14v14H1z', '#9c9c9c') + dash('M3 4h9M3 8h9M3 12h9', '#ddd') + f('M14 5v6l-4-3z', '#333')
};

const LABELS = {
  plan: 'pl<small><span>a</span><span>n</span></small>',
  elev: 'el<small><span>e</span><span>v</span></small>'
};

function tool(token) {
  if (token === '|') return '<span class="sep"></span>';
  const [name, arg] = token.split(':');
  if (name === 'v') return '<button class="tool tool-drop" aria-label="More options"><svg viewBox="0 0 8 8"><use href="#down"/></svg></button>';
  if (name === 't') return `<button class="tool tool-text${arg === 'nd' ? ' tool-muted' : ''}">${LABELS[arg] || arg}</button>`;
  return `<button class="tool${arg === 'on' ? ' is-on' : ''}" aria-label="${name}"><svg viewBox="0 0 16 16">${ICONS[name]}</svg></button>`;
}
document.querySelectorAll('[data-tools]').forEach(el => {
  el.innerHTML = el.dataset.tools.split(' ').map(tool).join('');
});

const line = (x1, y1, x2, y2, c, w = 1, o = 1) => `<line x1="${x1}" y1="${y1}" x2="${x2}" y2="${y2}" stroke="${c}" stroke-width="${w}" opacity="${o}"/>`;

// Plan view: grid lines A-E and 1-6 with dimensions
function drawPlan() {
  const xs = [306.5, 401.5, 496.5, 590.5, 685.5], ys = [578.5, 502.5, 427.5, 350.5, 275.5, 199.5];
  let out = '';
  xs.forEach((x, i) => {
    out += line(x, 177, x, 199, '#999') + line(x, 199, x, 578, '#d0d0d0') + line(x - 3, 184, x + 3, 178, '#999');
    out += `<circle cx="${x}" cy="160" r="13" fill="none" stroke="#aaa"/><text class="plan-text" x="${x}" y="164">${'ABCDE'[i]}</text>`;
    if (i < 4) out += `<text class="dim-text" x="${x + 47}" y="179">5 (m)</text>`;
  });
  ys.forEach((y, i) => {
    out += line(285, y, 307, y, '#999') + line(307, y, 685, y, '#d0d0d0') + line(285, y - 3, 291, y + 3, '#999');
    out += `<circle cx="267" cy="${y}" r="13" fill="none" stroke="#aaa"/><text class="plan-text" x="267" y="${y + 4}">${i + 1}</text>`;
    if (i < 5) out += `<text class="dim-text" transform="translate(286 ${y - 38}) rotate(-90)">4 (m)</text>`;
  });
  out += line(306, 181.5, 685, 181.5, '#aaa') + line(288.5, 199, 288.5, 578, '#888');
  out += line(306.5, 578, 306.5, 551, '#35d335') + f('M304 556l2.500-7 2.500 7z', '#35d335') + line(307, 578.5, 332, 578.5, '#d33') + f('M329 575.500l7 3-7 3z', '#c22');
  out += '<text class="axis-text" fill="#35c335" x="306" y="548">Y</text><text class="axis-text" fill="#c22" x="341" y="583">X</text>';
  document.getElementById('plan').innerHTML = out;
}

// Perspective of a 20 x 20 m building seen along its diagonal
function project(x, y, z = 0) {
  const t = (x + y) / 20, h = z / 12.5, d = 1 + 0.519 * t - 0.3126 * h;
  return [974 + 264.8 * (x - y) / 20 / d, (573 + 20.9 * t - 294.5 * h) / d];
}
const seg = (a, b) => 'M' + [a, b].map(p => project(...p).map(n => n.toFixed(1)).join(' ')).join('L');

function drawScene() {
  let minor = '', major = '', floors = '', base = '', columns = '', out = '';
  for (let i = -13; i <= 31; i++) {
    const d = seg([i, -13], [i, 31]) + seg([-13, i], [31, i]);
    if (i % 10 === 0 || i === 31) major += d; else minor += d;
  }
  [0, 3.5, 6.5, 9.5, 12.5].forEach(z => {
    let d = '';
    for (let x = 0; x <= 20; x += 5) d += seg([x, 0, z], [x, 20, z]);
    for (let y = 0; y <= 20; y += 4) d += seg([0, y, z], [20, y, z]);
    if (z) floors += d; else base = d;
  });
  for (let x = 0; x <= 20; x += 5) for (let y = 0; y <= 20; y += 4) columns += seg([x, y, 0], [x, y, 12.5]);
  out += s(minor, '#c3e2ec', .5) + s(major, '#a4cfdf', .7) + s(floors, '#888b90', .35) + s(columns, '#888b90', .4) + s(base, '#858a92', .6);
  const bubble = (x, y, name) => {
    let d = '';
    for (let a = 0; a < 360; a += 12) {
      const r = a * Math.PI / 180;
      d += (a ? 'L' : 'M') + project(x + 0.66 * Math.cos(r), y + 0.66 * Math.sin(r)).map(n => n.toFixed(1)).join(' ');
    }
    const [cx, cy] = project(x, y), size = Math.round(10 - (604 - cy) / 40);
    out += s(d + 'Z', '#aaa', .8) + `<text transform="translate(${cx.toFixed()} ${cy.toFixed()}) rotate(130)" y="${Math.round(size / 3)}" font-size="${size}" font-family="Liberation Sans, sans-serif" text-anchor="middle" fill="#999">${name}</text>`;
  };
  for (let i = 0; i < 6; i++) { bubble(-2.07, i * 4, i + 1); out += s(seg([-1.3, i * 4], [0, i * 4]), '#bbb', .5); }
  for (let i = 0; i < 5; i++) bubble(i * 5, 22.07, 'ABCDE'[i]);
  out += s('M974 573L952 551', '#3c3') + s('M974 573l22-22', '#c33') + s('M974 573v-15', '#22b');
  out += f('M949 547l7 3-4 4z', '#2c2') + f('M999 547l-7 3 4 4z', '#c11') + f('M974 554l3 6h-6z', '#22b');
  out += '<text class="axis-text" fill="#3c3" x="944" y="548">Y</text><text class="axis-text" fill="#22a" x="974" y="552">Z</text><text class="axis-text" fill="#c22" x="1003" y="548">X</text>';
  document.getElementById('scene').innerHTML = out;
}
drawPlan();
drawScene();
```
